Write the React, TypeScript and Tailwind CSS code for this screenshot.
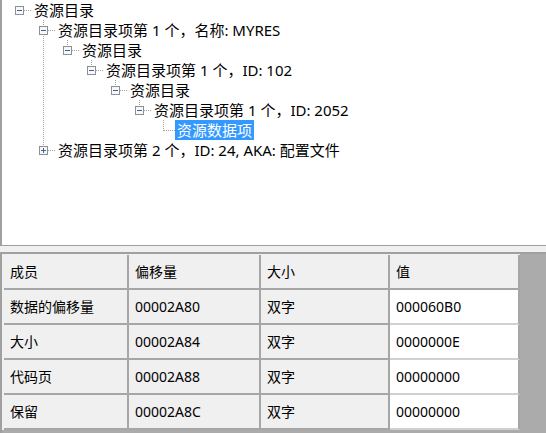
import React from 'react';

interface TreeRow {
  level: number;
  text: string;
  button?: 'minus' | 'plus';
  last: boolean;
  guides: number[];
  selected?: boolean;
}

const treeRows: TreeRow[] = [
  { level: 0, text: '资源目录', button: 'minus', last: true, guides: [] },
  { level: 1, text: '资源目录项第 1 个，名称: MYRES', button: 'minus', last: false, guides: [] },
  { level: 2, text: '资源目录', button: 'minus', last: true, guides: [1] },
  { level: 3, text: '资源目录项第 1 个，ID: 102', button: 'minus', last: true, guides: [1] },
  { level: 4, text: '资源目录', button: 'minus', last: true, guides: [1] },
  { level: 5, text: '资源目录项第 1 个，ID: 2052', button: 'minus', last: true, guides: [1] },
  { level: 6, text: '资源数据项', last: true, guides: [1], selected: true },
  { level: 1, text: '资源目录项第 2 个，ID: 24, AKA: 配置文件', button: 'plus', last: true, guides: [] },
];

const tableHead = ['成员', '偏移量', '大小', '值'];

const tableRows = [
  ['数据的偏移量', '00002A80', '双字', '000060B0'],
  ['大小', '00002A84', '双字', '0000000E'],
  ['代码页', '00002A88', '双字', '00000000'],
  ['保留', '00002A8C', '双字', '00000000'],
];

const DOT = '#a0a0a0';

// one 24px indent column of the tree: dotted lines + expand box
const LineCell = ({
  top,
  bottom,
  horiz,
  button,
}: {
  top?: boolean;
  bottom?: boolean;
  horiz?: boolean;
  button?: 'minus' | 'plus';
}) => (
  <svg width="24" height="20" className="shrink-0" shapeRendering="crispEdges">
    {top && <line x1="12.5" y1="0" x2="12.5" y2="11" stroke={DOT} strokeDasharray="1 1" />}
    {bottom && <line x1="12.5" y1="10" x2="12.5" y2="20" stroke={DOT} strokeDasharray="1 1" />}
    {horiz && <line x1="13" y1="10.5" x2="24" y2="10.5" stroke={DOT} strokeDasharray="1 1" />}
    {button && (
      <g>
        <rect x="8.5" y="6.5" width="8" height="8" fill="#f7f7f7" stroke="#8f8f8f" />
        <line x1="10" y1="10.5" x2="15" y2="10.5" stroke="#3d64a8" />
        {button === 'plus' && <line x1="12.5" y1="8" x2="12.5" y2="13" stroke="#3d64a8" />}
      </g>
    )}
  </svg>
);

const Tree = () => (
  <div className="h-[246px] shrink-0 bg-white border-l-2 border-b border-[#a0a0a0] pl-[5px]">
    {treeRows.map((row, i) => (
      <div key={i} className="flex h-[20px] items-center">
        {Array.from({ length: row.level }).map((_, k) => (
          <LineCell key={k} top={row.guides.includes(k)} bottom={row.guides.includes(k)} />
        ))}
        <LineCell top={row.level > 0} bottom={!row.last} horiz button={row.button} />
        <span
          className={
            row.selected
              ? 'h-[20px] leading-[20px] px-[2px] bg-[#3399ff] text-white whitespace-nowrap'
              : 'h-[20px] leading-[20px] px-[3px] text-black whitespace-nowrap'
          }
        >
          {row.text}
        </span>
      </div>
    ))}
  </div>
);

const cellBase = 'h-[35px] flex items-center px-[6px] border-r-2 border-b-2 whitespace-nowrap';

const Table = () => (
  <div className="flex-1 bg-[#ababab] border-l-2 border-t-2 border-[#a0a0a0] text-[14px]">
    <div className="grid grid-cols-[125px_132px_129px_130px] w-[518px] border-l-2 border-t border-[#f0f0f0]">
      {tableHead.map((h) => (
        <div key={h} className={`${cellBase} bg-[#f0f0f0] border-[#a6a6a6]`}>
          {h}
        </div>
      ))}
      {tableRows.map((r, i) =>
        r.map((c, j) => (
          <div
            key={`${i}-${j}`}
            className={
              j === 3
                ? `${cellBase} bg-white border-r-[#a6a6a6] border-b-[#d0d0d0]`
                : `${cellBase} bg-[#f0f0f0] border-[#a6a6a6]`
            }
          >
            {c}
          </div>
        ))
      )}
    </div>
  </div>
);

export default function App() {
  return (
    <div className="w-[546px] h-[433px] overflow-hidden flex flex-col bg-[#f0f0f0] text-black text-[15px] font-['Noto_Sans','Noto_Sans_CJK_SC',sans-serif]">
      <Tree />
      <div className="h-[6px] shrink-0 bg-[#f0f0f0]" />
      <Table />
    </div>
  );
}
